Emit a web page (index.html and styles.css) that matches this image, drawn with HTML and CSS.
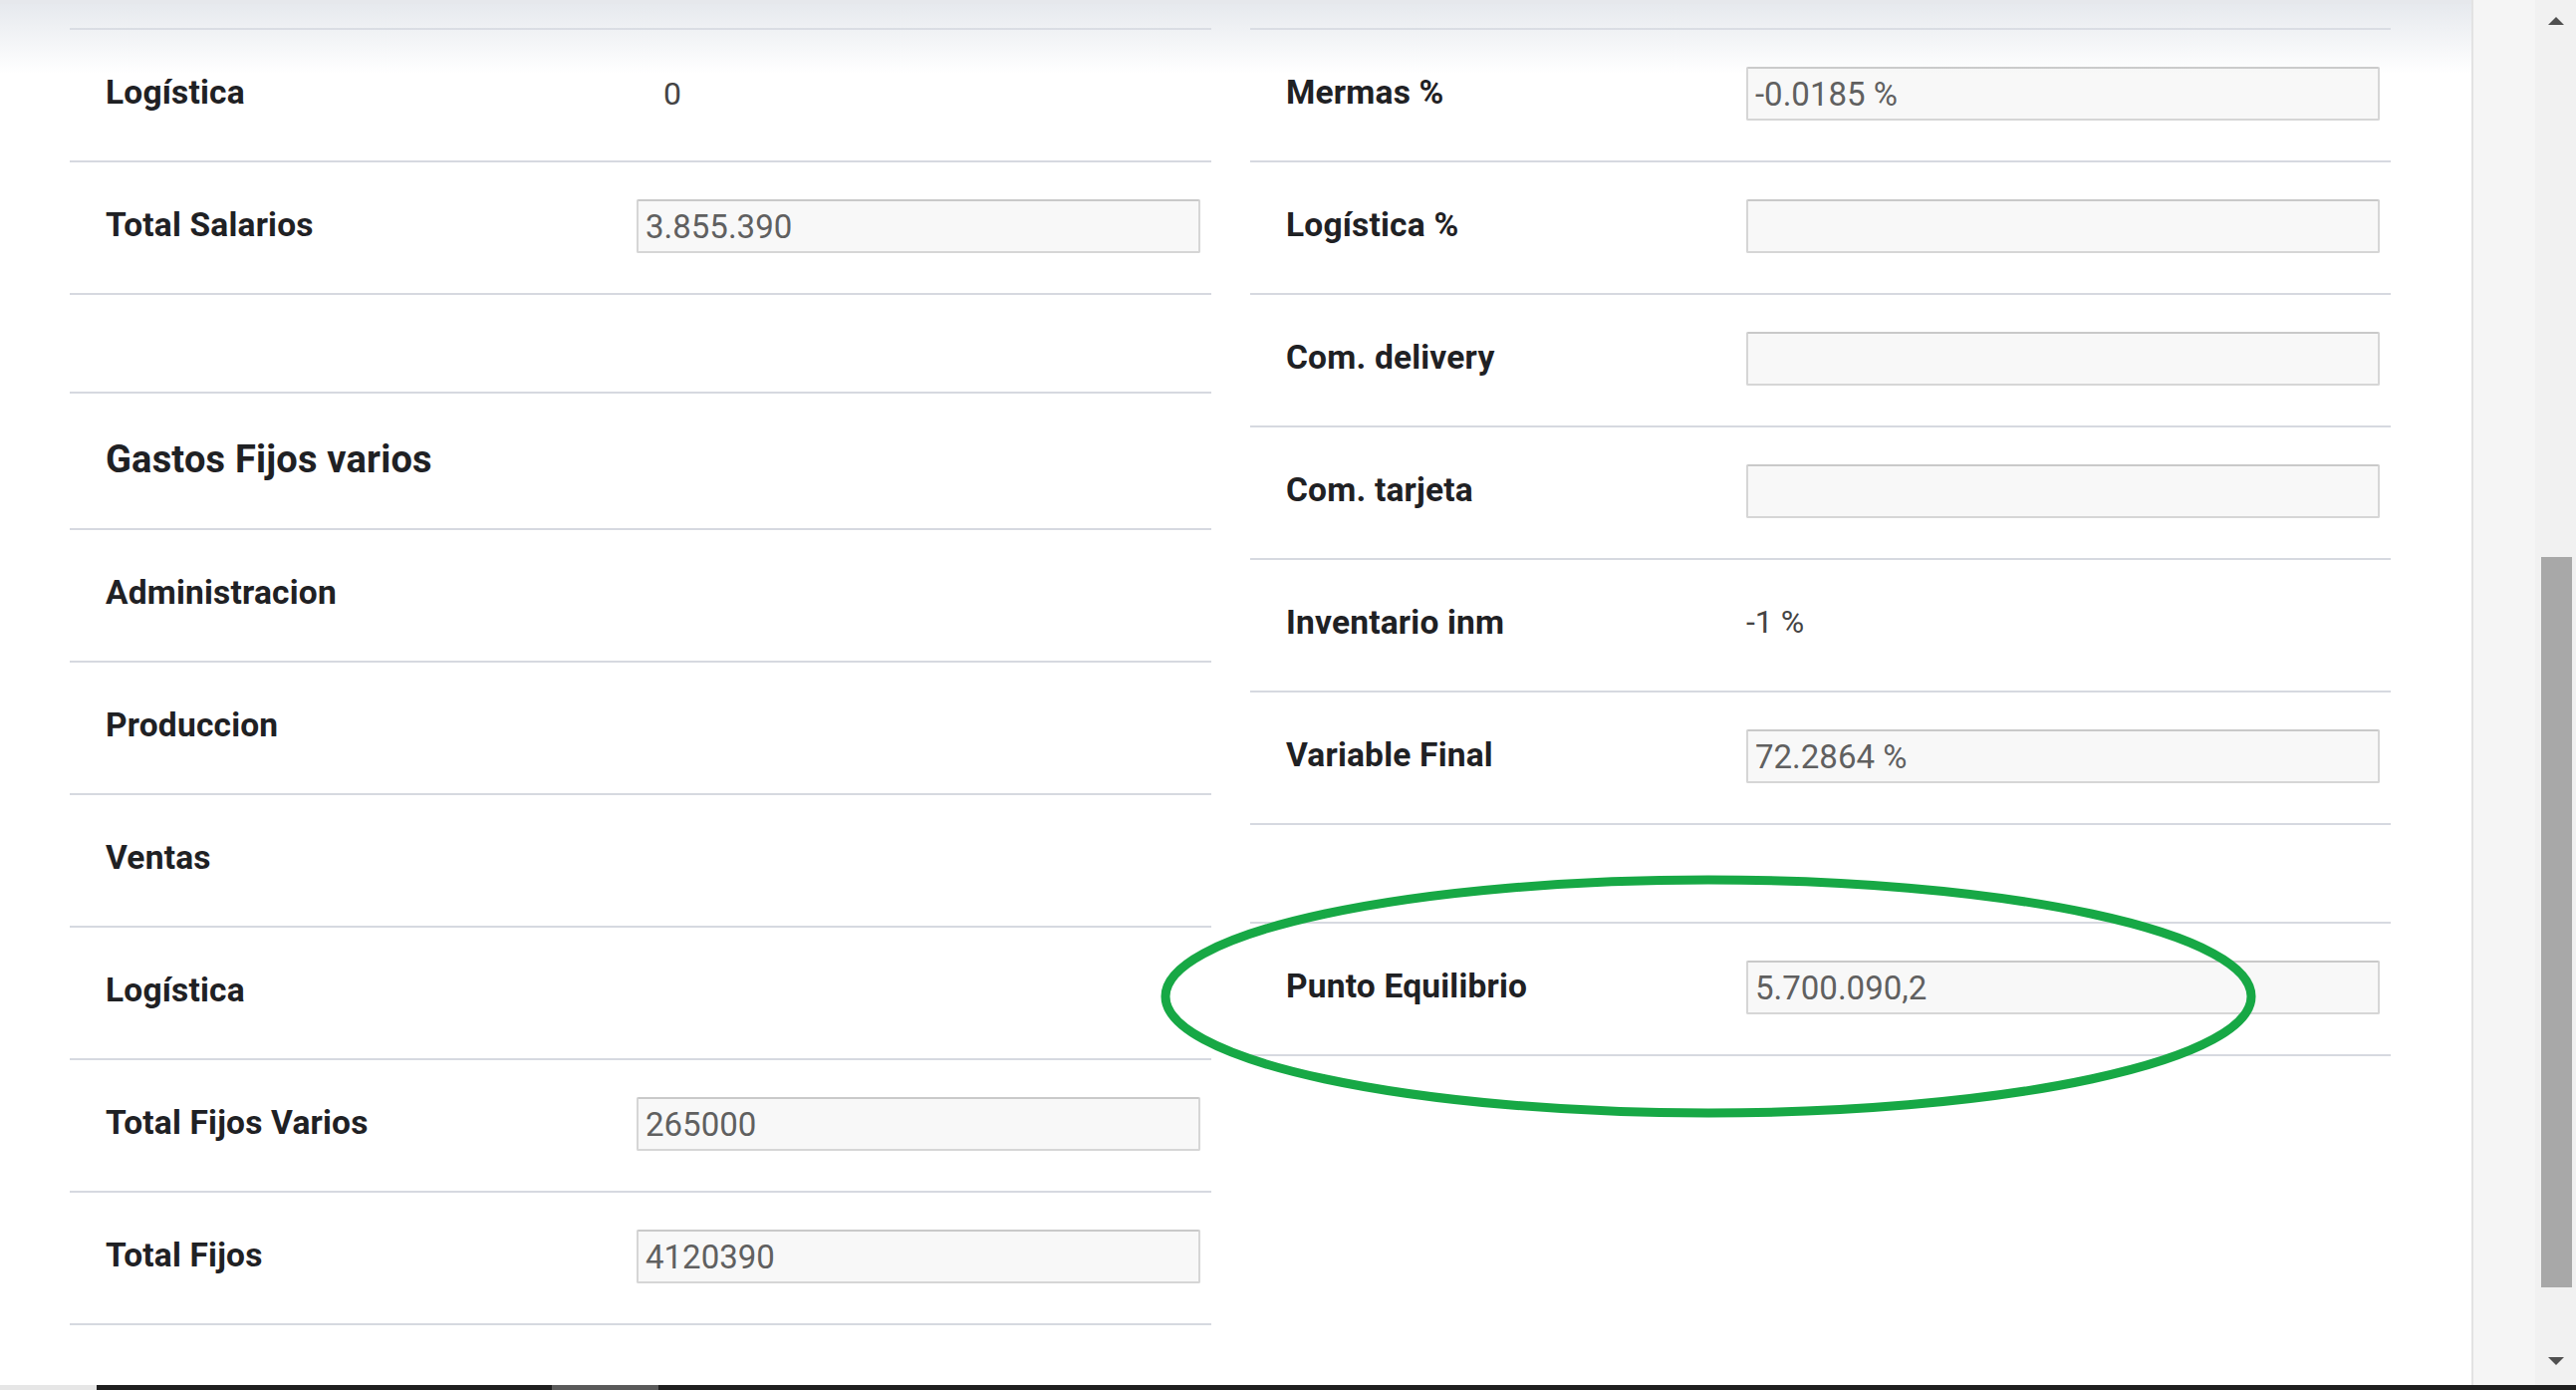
FILE: index.html
```html
<!DOCTYPE html>
<html lang="es">
<head>
    <meta charset="UTF-8">
    <title>Punto de Equilibrio</title>
    <link rel="stylesheet" href="styles.css">
</head>
<body>
    <div class="screen">
        <div class="main">
            <div class="top-shadow"></div>

            <div class="sheet">
                <!-- columna izquierda: fijos -->
                <div class="col col-left">
                    <div class="row">
                        <div class="label">Logística</div>
                        <div class="value plain plain-left">0</div>
                    </div>
                    <div class="row">
                        <div class="label">Total Salarios</div>
                        <div class="value"><input type="text" value="3.855.390" readonly></div>
                    </div>
                    <div class="row row-empty"></div>
                    <div class="row row-title">
                        <h2>Gastos Fijos varios</h2>
                    </div>
                    <div class="row">
                        <div class="label">Administracion</div>
                    </div>
                    <div class="row">
                        <div class="label">Produccion</div>
                    </div>
                    <div class="row">
                        <div class="label">Ventas</div>
                    </div>
                    <div class="row">
                        <div class="label">Logística</div>
                    </div>
                    <div class="row">
                        <div class="label">Total Fijos Varios</div>
                        <div class="value"><input type="text" value="265000" readonly></div>
                    </div>
                    <div class="row">
                        <div class="label">Total Fijos</div>
                        <div class="value"><input type="text" value="4120390" readonly></div>
                    </div>
                </div>

                <!-- columna derecha: variables -->
                <div class="col col-right">
                    <div class="row">
                        <div class="label">Mermas %</div>
                        <div class="value"><input type="text" value="-0.0185 %" readonly></div>
                    </div>
                    <div class="row">
                        <div class="label">Logística %</div>
                        <div class="value"><input type="text" value="" readonly></div>
                    </div>
                    <div class="row">
                        <div class="label">Com. delivery</div>
                        <div class="value"><input type="text" value="" readonly></div>
                    </div>
                    <div class="row">
                        <div class="label">Com. tarjeta</div>
                        <div class="value"><input type="text" value="" readonly></div>
                    </div>
                    <div class="row">
                        <div class="label">Inventario inm</div>
                        <div class="value plain plain-right">-1 %</div>
                    </div>
                    <div class="row">
                        <div class="label">Variable Final</div>
                        <div class="value"><input type="text" value="72.2864 %" readonly></div>
                    </div>
                    <div class="row row-empty"></div>
                    <div class="row">
                        <div class="label">Punto Equilibrio</div>
                        <div class="value"><input type="text" value="5.700.090,2" readonly></div>
                    </div>
                </div>
            </div>

            <!-- marca verde sobre el resultado -->
            <svg class="highlight" width="1112" height="260" viewBox="0 0 1112 260">
                <ellipse cx="556" cy="128" rx="545" ry="117" fill="none" stroke="#17a845" stroke-width="9"/>
            </svg>
        </div>

        <div class="side"></div>

        <div class="scrollbar">
            <div class="arrow arrow-up"></div>
            <div class="thumb"></div>
            <div class="arrow arrow-down"></div>
        </div>
    </div>

    <div class="taskbar">
        <div class="task-light"></div>
        <div class="task-dark"></div>
        <div class="task-mid"></div>
        <div class="task-dark task-rest"></div>
    </div>
</body>
</html>
```

FILE: styles.css
```css
/* Estilos */
html, body {
    margin: 0;
    padding: 0;
}

body {
    width: 2586px;
    height: 1395px;
    overflow: hidden;
    font-family: Roboto, "Liberation Sans", Arial, sans-serif;
    background-color: #fff;
    color: #1f2124;
    display: flex;
    flex-direction: column;
}

.screen {
    height: 1390px;
    display: flex;
}

.main {
    position: relative;
    flex: 1;
    overflow: hidden;
}

.top-shadow {
    position: absolute;
    left: 0;
    right: 0;
    top: 0;
    height: 70px;
    background: linear-gradient(to bottom, rgba(222, 226, 232, 0.75), rgba(255, 255, 255, 0));
    border-top: 4px solid #e6e8ec;
    pointer-events: none;
}

.sheet {
    display: flex;
    gap: 39px;
    padding-left: 70px;
    margin-top: 28px;
}

.col {
    border-top: 2px solid #d6d9e0;
}

.col-left {
    width: 1146px;
}

.col-right {
    width: 1145px;
}

.row {
    height: 133px;
    box-sizing: border-box;
    border-bottom: 2px solid #d6d9e0;
    display: grid;
    align-items: center;
}

.col-left .row {
    grid-template-columns: 569px 566px;
}

.col-right .row {
    grid-template-columns: 498px 636px;
}

.row-empty {
    height: 99px;
}

.row-title {
    height: 137px;
}

.label {
    padding-left: 36px;
    margin-top: -6px;
    font-size: 33.5px;
    font-weight: bold;
    letter-spacing: 0.2px;
    color: #1f2124;
    white-space: nowrap;
}

h2 {
    margin: -4px 0 0;
    padding-left: 36px;
    font-size: 38px;
    font-weight: bold;
    letter-spacing: 0.2px;
    color: #1f2124;
    white-space: nowrap;
    grid-column: 1 / 3;
}

.value {
    display: flex;
    align-items: center;
}

.plain {
    font-size: 32px;
    color: #444;
}

.plain-left {
    padding-left: 27px;
    margin-top: -4px;
}

.plain-right {
    margin-top: -7px;
}

input[type="text"] {
    width: 100%;
    height: 54px;
    box-sizing: border-box;
    margin-top: -3px;
    padding: 0 7px;
    font-family: Roboto, "Liberation Sans", Arial, sans-serif;
    font-size: 33px;
    color: #606060;
    background-color: #f8f8f8;
    border: 2px solid #d6d6d6;
    border-top-color: #c9c9c9;
    border-radius: 2px;
    outline: none;
}

.highlight {
    position: absolute;
    left: 1159px;
    top: 872px;
    pointer-events: none;
}

.side {
    width: 62px;
    background-color: #f5f5f5;
    border-left: 2px solid #e3e3e3;
}

.scrollbar {
    width: 41px;
    background-color: #f1f1f1;
    display: flex;
    flex-direction: column;
    align-items: center;
}

.arrow {
    width: 0;
    height: 0;
    border-left: 8px solid transparent;
    border-right: 8px solid transparent;
}

.arrow-up {
    margin-top: 17px;
    border-bottom: 8px solid #505050;
}

.thumb {
    width: 31px;
    height: 733px;
    margin-top: 534px;
    margin-left: 1px;
    background-color: #a8a8a8;
}

.arrow-down {
    margin-top: 70px;
    border-top: 8px solid #505050;
}

.taskbar {
    height: 5px;
    display: flex;
}

.task-light {
    width: 97px;
    background-color: #e6e6e6;
}

.task-dark {
    width: 457px;
    background-color: #1f1f1f;
}

.task-mid {
    width: 107px;
    background-color: #5a5a5a;
}

.task-rest {
    flex: 1;
}
```
